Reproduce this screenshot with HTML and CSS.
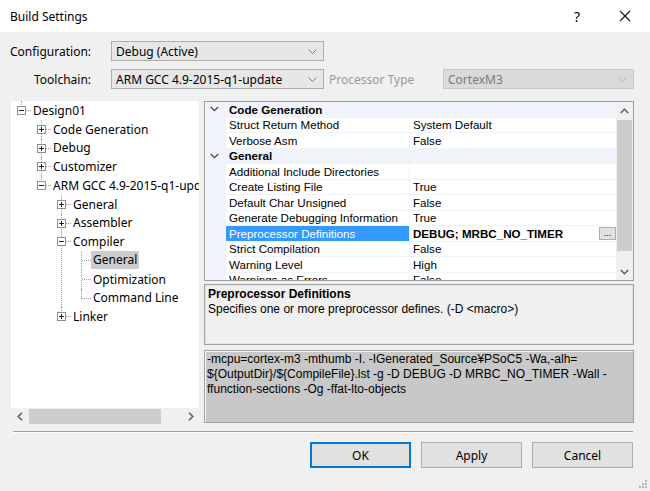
FILE: index.html
```html
<!DOCTYPE html>
<html>
<head>
<meta charset="utf-8">
<title>Build Settings</title>
<link rel="stylesheet" href="styles.css">
</head>
<body>
<div class="window">
  <div class="titlebar">
    <span class="title">Build Settings</span>
    <span class="tb-btn help">?</span>
    <span class="tb-btn close"><svg width="12" height="12" viewBox="0 0 12 12"><path d="M1 1L11 11M11 1L1 11" stroke="#111" stroke-width="1.1" fill="none"/></svg></span>
  </div>
  <div class="content">
    <div class="cfg-row">
      <span class="cfg-label">Configuration:</span>
      <div class="combo"><span class="combo-text">Debug (Active)</span><svg class="chev" width="9" height="5" viewBox="0 0 9 5"><path d="M0.5 0.5L4.5 4.5L8.5 0.5" stroke="#777" fill="none"/></svg></div>
    </div>
    <div class="cfg-row second">
      <span class="cfg-label tool">Toolchain:</span>
      <div class="combo"><span class="combo-text">ARM GCC 4.9-2015-q1-update</span><svg class="chev" width="9" height="5" viewBox="0 0 9 5"><path d="M0.5 0.5L4.5 4.5L8.5 0.5" stroke="#777" fill="none"/></svg></div>
      <span class="proc-label">Processor Type</span>
      <div class="combo disabled"><span class="combo-text">CortexM3</span><svg class="chev" width="9" height="5" viewBox="0 0 9 5"><path d="M0.5 0.5L4.5 4.5L8.5 0.5" stroke="#bbb" fill="none"/></svg></div>
    </div>

    <div class="main">
      <div class="tree">
        <div class="tree-view">
          <ul>
            <li><div class="node"><svg class="exp" viewBox="0 0 9 9"><rect x="0.5" y="0.5" width="8" height="8" fill="#fff" stroke="#8f8f8f"/><path d="M2 4.5H7" stroke="#222"/></svg>Design01</div>
              <ul>
                <li><div class="node"><svg class="exp" viewBox="0 0 9 9"><rect x="0.5" y="0.5" width="8" height="8" fill="#fff" stroke="#8f8f8f"/><path d="M2 4.5H7M4.5 2V7" stroke="#222"/></svg>Code Generation</div></li>
                <li><div class="node"><svg class="exp" viewBox="0 0 9 9"><rect x="0.5" y="0.5" width="8" height="8" fill="#fff" stroke="#8f8f8f"/><path d="M2 4.5H7M4.5 2V7" stroke="#222"/></svg>Debug</div></li>
                <li><div class="node"><svg class="exp" viewBox="0 0 9 9"><rect x="0.5" y="0.5" width="8" height="8" fill="#fff" stroke="#8f8f8f"/><path d="M2 4.5H7M4.5 2V7" stroke="#222"/></svg>Customizer</div></li>
                <li><div class="node"><svg class="exp" viewBox="0 0 9 9"><rect x="0.5" y="0.5" width="8" height="8" fill="#fff" stroke="#8f8f8f"/><path d="M2 4.5H7" stroke="#222"/></svg>ARM GCC 4.9-2015-q1-update</div>
                  <ul>
                    <li><div class="node"><svg class="exp" viewBox="0 0 9 9"><rect x="0.5" y="0.5" width="8" height="8" fill="#fff" stroke="#8f8f8f"/><path d="M2 4.5H7M4.5 2V7" stroke="#222"/></svg>General</div></li>
                    <li><div class="node"><svg class="exp" viewBox="0 0 9 9"><rect x="0.5" y="0.5" width="8" height="8" fill="#fff" stroke="#8f8f8f"/><path d="M2 4.5H7M4.5 2V7" stroke="#222"/></svg>Assembler</div></li>
                    <li><div class="node"><svg class="exp" viewBox="0 0 9 9"><rect x="0.5" y="0.5" width="8" height="8" fill="#fff" stroke="#8f8f8f"/><path d="M2 4.5H7" stroke="#222"/></svg>Compiler</div>
                      <ul>
                        <li><div class="node"><span class="sel">General</span></div></li>
                        <li><div class="node">Optimization</div></li>
                        <li><div class="node">Command Line</div></li>
                      </ul>
                    </li>
                    <li><div class="node"><svg class="exp" viewBox="0 0 9 9"><rect x="0.5" y="0.5" width="8" height="8" fill="#fff" stroke="#8f8f8f"/><path d="M2 4.5H7M4.5 2V7" stroke="#222"/></svg>Linker</div></li>
                  </ul>
                </li>
              </ul>
            </li>
          </ul>
        </div>
        <div class="hscroll">
          <div class="sb-btn"><svg width="6" height="9" viewBox="0 0 6 9"><path d="M5 0.8L1.2 4.5L5 8.2" stroke="#606060" stroke-width="1.6" fill="none"/></svg></div>
          <div class="hs-track"><div class="hs-thumb"></div></div>
          <div class="sb-btn"><svg width="6" height="9" viewBox="0 0 6 9"><path d="M1 0.8L4.8 4.5L1 8.2" stroke="#606060" stroke-width="1.6" fill="none"/></svg></div>
        </div>
      </div>

      <div class="right">
        <div class="grid">
          <div class="grid-rows">
            <div class="prow cat"><span class="gutter"><svg width="9" height="6" viewBox="0 0 9 6"><path d="M0.8 1L4.5 4.7L8.2 1" stroke="#444" stroke-width="1.3" fill="none"/></svg></span><span class="cat-name">Code Generation</span></div>
            <div class="prow"><span class="gutter"></span><span class="pname">Struct Return Method</span><span class="pval">System Default</span></div>
            <div class="prow"><span class="gutter"></span><span class="pname">Verbose Asm</span><span class="pval">False</span></div>
            <div class="prow cat"><span class="gutter"><svg width="9" height="6" viewBox="0 0 9 6"><path d="M0.8 1L4.5 4.7L8.2 1" stroke="#444" stroke-width="1.3" fill="none"/></svg></span><span class="cat-name">General</span></div>
            <div class="prow"><span class="gutter"></span><span class="pname">Additional Include Directories</span><span class="pval"></span></div>
            <div class="prow"><span class="gutter"></span><span class="pname">Create Listing File</span><span class="pval">True</span></div>
            <div class="prow"><span class="gutter"></span><span class="pname">Default Char Unsigned</span><span class="pval">False</span></div>
            <div class="prow"><span class="gutter"></span><span class="pname">Generate Debugging Information</span><span class="pval">True</span></div>
            <div class="prow selected"><span class="gutter"></span><span class="pname">Preprocessor Definitions</span><span class="pval bold">DEBUG; MRBC_NO_TIMER<span class="ellipsis">...</span></span></div>
            <div class="prow"><span class="gutter"></span><span class="pname">Strict Compilation</span><span class="pval">False</span></div>
            <div class="prow"><span class="gutter"></span><span class="pname">Warning Level</span><span class="pval">High</span></div>
            <div class="prow"><span class="gutter"></span><span class="pname">Warnings as Errors</span><span class="pval">False</span></div>
          </div>
          <div class="vscroll">
            <div class="sb-btn v"><svg width="9" height="6" viewBox="0 0 9 6"><path d="M0.8 5L4.5 1.3L8.2 5" stroke="#606060" stroke-width="1.6" fill="none"/></svg></div>
            <div class="vs-track"><div class="vs-thumb"></div></div>
            <div class="sb-btn v"><svg width="9" height="6" viewBox="0 0 9 6"><path d="M0.8 1L4.5 4.7L8.2 1" stroke="#606060" stroke-width="1.6" fill="none"/></svg></div>
          </div>
        </div>
        <div class="desc">
          <div class="desc-title">Preprocessor Definitions</div>
          <div class="desc-text">Specifies one or more preprocessor defines. (-D &lt;macro&gt;)</div>
        </div>
        <div class="cmd">-mcpu=cortex-m3 -mthumb -I. -IGenerated_Source¥PSoC5 -Wa,-alh=<br>${OutputDir}/${CompileFile}.lst -g -D DEBUG -D MRBC_NO_TIMER -Wall -<br>ffunction-sections -Og -ffat-lto-objects</div>
      </div>
    </div>

    <div class="sep"></div>
    <div class="buttons">
      <button class="btn default">OK</button>
      <button class="btn">Apply</button>
      <button class="btn">Cancel</button>
    </div>
  </div>
  <svg class="grip" width="9" height="9" viewBox="0 0 9 9"><g fill="#b4b4b4"><rect x="7" y="1" width="2" height="2"/><rect x="4" y="4" width="2" height="2"/><rect x="7" y="4" width="2" height="2"/><rect x="1" y="7" width="2" height="2"/><rect x="4" y="7" width="2" height="2"/><rect x="7" y="7" width="2" height="2"/></g></svg>
</div>
</body>
</html>
```

FILE: styles.css
```css
* { box-sizing: border-box; }
html, body { margin: 0; padding: 0; }
body {
  width: 650px;
  height: 491px;
  overflow: hidden;
  font-family: "Noto Sans", "Liberation Sans", sans-serif;
  font-size: 12px;
  color: #000;
  background: #f0f0f0;
}
.window {
  position: relative;
  width: 650px;
  height: 491px;
  background: #f0f0f0;
  display: flex;
  flex-direction: column;
}
.titlebar {
  height: 32px;
  background: #fff;
  display: flex;
  align-items: center;
  padding-left: 10px;
  flex: none;
}
.title { font-size: 12px; flex: 1; }
.tb-btn { display: flex; align-items: center; justify-content: center; height: 32px; }
.help { font-size: 14px; width: 46px; }
.close { width: 50px; }

.content { flex: 1; display: flex; flex-direction: column; padding-top: 9px; }

.cfg-row { display: flex; align-items: center; height: 20px; padding-left: 10px; }
.cfg-row.second { margin-top: 8px; }
.cfg-label { width: 101px; flex: none; }
.cfg-label.tool { padding-left: 24px; }
.combo {
  width: 213px;
  height: 20px;
  border: 1px solid #acacac;
  background: #e7e7e7;
  display: flex;
  align-items: center;
  padding-left: 4px;
  padding-right: 6px;
  flex: none;
}
.combo-text { flex: 1; white-space: nowrap; }
.combo.disabled { width: 191px; background: #dadada; border-color: #c8c8c8; color: #7a7a7a; }
.proc-label { width: 119px; padding-left: 5px; color: #9a9a9a; flex: none; }

.main { display: flex; margin-top: 12px; padding-left: 11px; height: 324px; flex: none; }
.tree { width: 188px; display: flex; flex-direction: column; flex: none; }
.tree-view { flex: 1; background: #fff; overflow: hidden; padding-left: 1px; }
.tree-view ul { list-style: none; margin: 0; padding: 0; }
.tree-view ul ul { padding-left: 20px; }
.tree-view li { position: relative; }
.tree-view li::before {
  content: "";
  position: absolute;
  left: 9px;
  top: 0;
  bottom: 0;
  border-left: 1px dotted #a0a0a0;
}
.tree-view li:last-child::before { bottom: auto; height: 10px; }
.node {
  position: relative;
  height: 18.75px;
  display: flex;
  align-items: center;
  padding-left: 21px;
  white-space: nowrap;
}
.node::before {
  content: "";
  position: absolute;
  left: 10px;
  width: 9px;
  top: 9px;
  border-top: 1px dotted #a0a0a0;
}
.exp {
  position: absolute;
  left: 5px;
  top: 5px;
  width: 9px;
  height: 9px;
  shape-rendering: crispEdges;
  z-index: 1;
}
.sel {
  background: #cccccc;
  margin-left: -2px;
  padding: 0 2px;
  height: 18px;
  line-height: 18px;
}

.hscroll { height: 17px; display: flex; background: #f0f0f0; flex: none; }
.sb-btn { width: 17px; height: 17px; display: flex; align-items: center; justify-content: center; flex: none; }
.hs-track { flex: 1; position: relative; padding: 1px 0; }
.hs-thumb { width: 132px; height: 15px; background: #cdcdcd; margin-left: 1px; }

.right { width: 430px; margin-left: 5px; display: flex; flex-direction: column; flex: none; }
.grid {
  height: 180px;
  border: 1px solid #a0a0a0;
  display: flex;
  background: #fff;
  flex: none;
  font-family: "Liberation Sans", sans-serif;
  font-size: 11.6px;
}
.grid-rows { flex: 1; overflow: hidden; background: #f0f4fa; }
.prow { display: flex; height: 14.5px; margin-bottom: 1px; align-items: stretch; white-space: nowrap; }
.prow.cat { height: 15.5px; margin-bottom: 0; padding-bottom: 1px; }
.gutter { width: 21px; flex: none; display: flex; align-items: center; padding-left: 5px; }
.cat-name { font-weight: bold; padding-left: 3px; display: flex; align-items: center; }
.pname { width: 183px; flex: none; background: #fff; padding-left: 3px; display: flex; align-items: center; overflow: hidden; }
.pval { flex: 1; background: #fff; margin-left: 1px; padding-left: 3px; display: flex; align-items: center; overflow: hidden; }
.pval.bold { font-weight: bold; }
.selected .pname { background: #3399ff; color: #fff; }
.ellipsis {
  margin-left: auto;
  width: 17px;
  height: 13px;
  border: 1px solid #adadad;
  background: #e1e1e1;
  font-weight: normal;
  font-size: 9px;
  display: flex;
  align-items: flex-end;
  justify-content: center;
  line-height: 9px;
  padding-bottom: 1px;
}

.vscroll { width: 17px; background: #f0f0f0; display: flex; flex-direction: column; flex: none; }
.vs-track { flex: 1; padding: 1px 1px 0 1px; }
.vs-thumb { height: 131px; background: #cdcdcd; }

.desc {
  margin-top: 3px;
  height: 61px;
  border: 1px solid #a0a0a0;
  box-shadow: inset 0 0 0 1px #e4e4e4;
  background: #f0f0f0;
  padding: 2px 3px;
  font-family: "Liberation Sans", sans-serif;
  font-size: 12px;
  line-height: 15px;
  flex: none;
}
.desc-title { font-weight: bold; }

.cmd {
  margin-top: 5px;
  height: 73px;
  border: 1px solid #a0a0a0;
  box-shadow: inset 1px 1px 0 #f6f6f6;
  background: #c8c8c8;
  padding: 1px 2px;
  font-family: "Liberation Sans", sans-serif;
  font-size: 12px;
  line-height: 15px;
  flex: none;
  white-space: nowrap;
}

.sep {
  margin: 6px 17px 0 13px;
  height: 2px;
  border-top: 1px solid #a0a0a0;
  border-bottom: 1px solid #ffffff;
  flex: none;
}
.buttons {
  display: flex;
  justify-content: flex-end;
  gap: 10px;
  padding-right: 17px;
  margin-top: 9px;
}
.btn {
  width: 101px;
  height: 26px;
  border: 1px solid #adadad;
  background: #e1e1e1;
  font-family: "Noto Sans", "Liberation Sans", sans-serif;
  font-size: 12px;
  color: #000;
  padding: 0;
}
.btn.default { border: 2px solid #0078d7; }
.grip { position: absolute; right: 3px; bottom: 3px; }
```
